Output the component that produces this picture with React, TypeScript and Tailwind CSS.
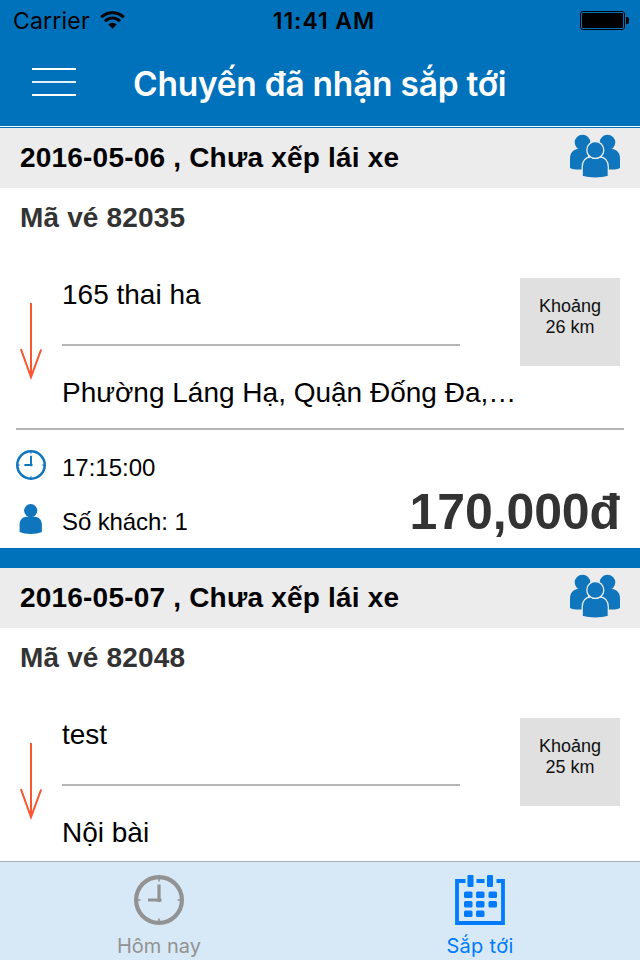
import React from 'react';

type Trip = {
  date: string;
  status: string;
  code: string;
  from: string;
  to: string;
  distance: string;
  summary?: { time: string; guests: number; price: string };
};

const TRIPS: Trip[] = [
  {
    date: '2016-05-06',
    status: 'Chưa xếp lái xe',
    code: '82035',
    from: '165 thai ha',
    to: 'Phường Láng Hạ, Quận Đống Đa,…',
    distance: '26 km',
    summary: { time: '17:15:00', guests: 1, price: '170,000đ' },
  },
  {
    date: '2016-05-07',
    status: 'Chưa xếp lái xe',
    code: '82048',
    from: 'test',
    to: 'Nội bài',
    distance: '25 km',
  },
];

const WifiIcon = () => (
  <svg className="h-[18px] w-[25px]" viewBox="0 0 25 18" fill="none" stroke="#000" strokeWidth="3">
    <path d="M1.2 6.3a16 16 0 0 1 22.6 0" />
    <path d="M5 10.2a10.6 10.6 0 0 1 15 0" />
    <path d="M12.5 17.8l-4.2-4.3a6 6 0 0 1 8.4 0z" fill="#000" stroke="none" />
  </svg>
);

const BatteryIcon = () => (
  <svg className="h-[19px] w-[49px]" viewBox="0 0 49 19">
    <rect x="0.5" y="0.5" width="44" height="18" rx="2.5" fill="none" stroke="#000" />
    <rect x="2" y="2" width="41" height="15" rx="1" />
    <path d="M46 6h1a2 2 0 0 1 2 2v3a2 2 0 0 1-2 2h-1z" />
  </svg>
);

const GroupIcon = () => (
  <svg className="h-[44px] w-[50px]" viewBox="0 0 50 44" fill="#0f75bc">
    <circle cx="12.5" cy="8.6" r="7.8" />
    <circle cx="37.5" cy="8.6" r="7.8" />
    <path d="M0 34v-9.500c0-5.500 3-9 8-9.500h10v20.500H9c-4 0-7-.5-9-1.500z" />
    <path d="M50 34v-9.500c0-5.500-3-9-8-9.500H32v20.500h9c4 0 7-.5 9-1.500z" />
    <g stroke="#ececec" strokeWidth="1.300">
      <path d="M12.200 42.300V33c0-6 3.500-10.200 8.800-10.200h8.500c5.300 0 8.800 4.200 8.800 10.200v9.300c-7 2.300-19 2.300-26.100 0z" />
      <circle cx="25.300" cy="16" r="8.500" />
    </g>
    <path d="M20 24.500c3 1 7.600 1 10.600 0v2H20z" />
  </svg>
);

const PersonIcon = () => (
  <svg className="h-[30px] w-[30px]" viewBox="0 0 30 30" fill="#0f75bc">
    <circle cx="14.700" cy="6.600" r="6.600" />
    <path d="M3.600 28v-7.500c0-4.500 3-7.800 7.200-7.800h7.900c4.200 0 7.200 3.300 7.200 7.800V28c-6 2.600-16.300 2.600-22.300 0z" />
  </svg>
);

const ClockIcon = ({ className, stroke }: { className: string; stroke: string }) => (
  <svg className={className} viewBox="0 0 50 50" fill="none" stroke={stroke}>
    <circle cx="25" cy="25" r="22.900" strokeWidth="4.200" />
    <path d="M25 9.500V27M27.500 25H14" strokeWidth="3.200" />
    <path d="M25 3v3.500M25 43.500V47M3 25h3.500M43.500 25H47" strokeWidth="1.600" />
  </svg>
);

const CalendarIcon = () => (
  <svg className="h-[50px] w-[50px]" viewBox="0 0 50 50" fill="#007aff">
    <path d="M10.500 6H2v42h46V6h-6.500M21.500 6h8" fill="none" stroke="#007aff" strokeWidth="3.800" />
    <rect x="12.500" y="0" width="6" height="12" rx="1.200" />
    <rect x="32" y="0" width="6" height="12" rx="1.200" />
    <rect x="9" y="16.500" width="8.500" height="6.500" rx="1.500" />
    <rect x="21" y="16.500" width="8.500" height="6.500" rx="1.500" />
    <rect x="33.500" y="16.500" width="8.500" height="6.500" rx="1.500" />
    <rect x="9" y="26" width="8.500" height="6.500" rx="1.500" />
    <rect x="21" y="26" width="8.500" height="6.500" rx="1.500" />
    <rect x="33.500" y="26" width="8.500" height="6.500" rx="1.500" />
    <rect x="9" y="35.500" width="8.500" height="6.500" rx="1.500" />
    <rect x="21" y="35.500" width="8.500" height="6.500" rx="1.500" />
  </svg>
);

const ArrowIcon = () => (
  <svg
    className="mt-[55px] h-[78px] w-[22px]"
    viewBox="0 0 22 78"
    fill="none"
    stroke="#f9552f"
    strokeWidth="2"
  >
    <path d="M11 0v74M.9 46L11 74 21.100 46.500" />
  </svg>
);

const TripCard = ({ trip }: { trip: Trip }) => (
  <section className="shrink-0 bg-white">
    <div className="flex h-[60px] items-center justify-between bg-[#ececec] px-5">
      <h2 className="text-[28px] leading-[60px] font-bold tracking-[0.2px] text-black">
        {trip.date} , {trip.status}
      </h2>
      <div className="-mt-1">
        <GroupIcon />
      </div>
    </div>

    <div className="h-[60px] px-5 text-[28px] leading-[59px] font-bold tracking-[0.15px] text-[#333]">
      Mã vé {trip.code}
    </div>

    {/* Route */}
    <div className="flex h-[180px] pl-5">
      <ArrowIcon />
      <div className="ml-5 w-[458px]">
        <div className="h-24 w-[398px] pt-[27px] text-[28px] leading-10 text-black">{trip.from}</div>
        <div className="h-0.5 w-[398px] bg-[#b5b5b5]" />
        <div className="pt-[27px] text-[28px] leading-10 whitespace-nowrap text-black">{trip.to}</div>
      </div>
      <div className="mt-[30px] h-[88px] w-[100px] bg-[#e0e0e0] pt-[18px] text-center text-[18px] leading-[21px] text-[#111]">
        Khoảng
        <br />
        {trip.distance}
      </div>
    </div>

    {/* Time, guests and price */}
    {trip.summary && (
      <>
        <div className="mx-4 h-0.5 bg-[#b5b5b5]" />
        <div className="flex h-[118px] justify-between pr-5 pl-4">
          <div className="flex flex-col gap-6 pt-5 text-[24px] leading-[30px] text-black">
            <div className="flex h-[30px] gap-4">
              <ClockIcon className="h-[30px] w-[30px]" stroke="#0f75bc" />
              <span className="pt-[3px]">{trip.summary.time}</span>
            </div>
            <div className="flex h-[30px] gap-4">
              <PersonIcon />
              <span className="pt-[3px] tracking-[-0.1px]">Số khách: {trip.summary.guests}</span>
            </div>
          </div>
          <div className="pt-[52px] text-[50px] leading-[60px] font-bold tracking-[-0.1px] text-[#333]">
            {trip.summary.price}
          </div>
        </div>
        <div className="h-5 bg-[#0071bb]" />
      </>
    )}
  </section>
);

export default function App() {
  return (
    <div className="flex h-[960px] w-[640px] flex-col overflow-hidden bg-white font-['Liberation_Sans',Arial,sans-serif]">
      <header className="h-[128px] shrink-0 bg-[#0071bb]">
        <div className="grid h-10 grid-cols-3 items-center pr-[11px] pl-[13px] font-['Inter',sans-serif] text-[23px] text-black">
          <div className="flex items-center gap-[10px]">
            <span className="pt-0.5 tracking-[0.2px]">Carrier</span>
            <WifiIcon />
          </div>
          <div className="pt-0.5 pl-1.5 text-center font-semibold tracking-[0.95px]">11:41 AM</div>
          <div className="flex justify-end">
            <BatteryIcon />
          </div>
        </div>
        <div className="flex h-[86px] items-center pl-8">
          <button type="button" aria-label="Menu" className="-mt-0.5 flex w-11 flex-col gap-[11px]">
            <span className="h-0.5 bg-white" />
            <span className="h-0.5 bg-white/90" />
            <span className="h-0.5 bg-white" />
          </button>
          <h1 className="ml-[57px] pt-0.5 font-['Inter',sans-serif] text-[33.500px] font-semibold tracking-[-0.25px] whitespace-nowrap text-white">
            Chuyến đã nhận sắp tới
          </h1>
        </div>
        <div className="h-px bg-white" />
      </header>

      <main className="flex min-h-0 flex-1 flex-col overflow-hidden">
        {TRIPS.map((trip) => (
          <TripCard key={trip.code} trip={trip} />
        ))}
      </main>

      <nav className="grid h-[99px] shrink-0 grid-cols-2 border-t border-[#a9adb1] bg-[#d7e9f6] font-['Inter',sans-serif] text-[20px] leading-6">
        <button type="button" className="flex flex-col items-center pt-[13px] pr-[2px] text-[#929292]">
          <ClockIcon className="h-[50px] w-[50px]" stroke="#929292" />
          <span className="mt-[9px]">Hôm nay</span>
        </button>
        <button type="button" className="flex flex-col items-center pt-[13px] text-[#007aff]">
          <CalendarIcon />
          <span className="mt-[9px] tracking-[0.3px]">Sắp tới</span>
        </button>
      </nav>
    </div>
  );
}
